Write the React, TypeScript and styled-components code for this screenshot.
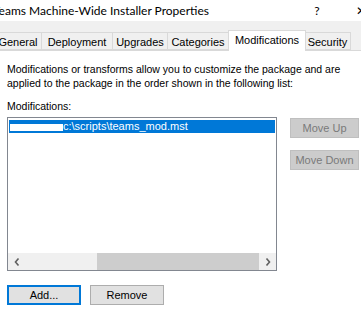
import {FunctionComponent} from 'react'
import styled, {createGlobalStyle} from 'styled-components'

const GlobalStyle = createGlobalStyle`
  html, body {
    margin: 0;
    padding: 0;
    background: #ffffff;
    overflow: hidden;
  }
  body {
    font-family: "Liberation Sans", Arial, sans-serif;
    font-size: 10.5px;
    color: #000000;
  }
`

const Dialog = styled.div`
  width: 361px;
  height: 309px;
  display: flex;
  flex-direction: column;
  background: #f0f0f0;
  overflow: hidden;
`

const TitleBar = styled.div`
  height: 21px;
  flex: none;
  display: flex;
  align-items: center;
  margin-right: -22px;
  background: #ffffff;
  font-family: Lato, "Noto Sans", sans-serif;
  font-size: 12px;
`

const Title = styled.span`
  flex: 1;
  margin-left: -7px;
  white-space: nowrap;
`

const TitleButton = styled.span`
  width: 44px;
  text-align: center;
  flex: none;
`

const TabStrip = styled.div`
  display: flex;
  align-items: flex-end;
  height: 20px;
  margin-top: 9px;
  margin-left: -6px;
  flex: none;
`

const Tab = styled.div<{$active?: boolean; $width: number}>`
  box-sizing: border-box;
  width: ${p => p.$width + (p.$active ? 1 : 0)}px;
  height: ${p => (p.$active ? 21 : 18)}px;
  padding-top: 3px;
  margin: ${p => (p.$active ? '0 -1px -1px -1px' : '0')};
  border: 1px solid #d9d9d9;
  border-bottom: ${p => (p.$active ? 'none' : '1px solid #d9d9d9')};
  border-left-width: ${p => (p.$active ? 1 : 0)}px;
  background: ${p => (p.$active ? '#ffffff' : '#f0f0f0')};
  text-align: center;
  font-size: 11px;
  position: relative;
  z-index: ${p => (p.$active ? 1 : 0)};
  white-space: nowrap;
  &:first-child {
    border-left-width: 1px;
  }
`

const Panel = styled.div`
  flex: 1;
  background: #ffffff;
  border-top: 1px solid #d9d9d9;
  padding: 11px 0 0 7px;
  display: flex;
  flex-direction: column;
`

const Description = styled.p`
  margin: 0;
  line-height: 14px;
  white-space: nowrap;
`

const FieldLabel = styled.div`
  margin-top: 9px;
  line-height: 14px;
`

const ListArea = styled.div`
  display: flex;
  gap: 13px;
  margin-top: 4px;
`

const ListBox = styled.div`
  box-sizing: border-box;
  width: 270px;
  height: 154px;
  border: 1px solid #828790;
  display: flex;
  flex-direction: column;
`

const ListItems = styled.div`
  flex: 1;
  padding: 2px 1px 0;
`

const ListItem = styled.div<{$selected?: boolean}>`
  height: 13px;
  line-height: 13px;
  padding-left: 1px;
  display: flex;
  align-items: center;
  background: ${p => (p.$selected ? '#0078d7' : 'transparent')};
  color: ${p => (p.$selected ? '#ffffff' : '#000000')};
  font-size: 11px;
  white-space: nowrap;
`

const Redaction = styled.span`
  display: inline-block;
  width: 53px;
  height: 7px;
  background: #ffffff;
  margin-top: 1px;
`

const HScrollBar = styled.div`
  height: 17px;
  display: flex;
  background: #f0f0f0;
`

const ScrollArrow = styled.div`
  width: 17px;
  display: flex;
  align-items: center;
  justify-content: center;
  flex: none;
`

const ScrollTrack = styled.div`
  flex: 1;
  display: flex;
  justify-content: flex-end;
`

const ScrollThumb = styled.div`
  width: 162px;
  background: #cdcdcd;
`

const SideButtons = styled.div`
  display: flex;
  flex-direction: column;
  gap: 12px;
  padding-top: 1px;
`

const Button = styled.button<{$default?: boolean; $width?: number}>`
  box-sizing: border-box;
  width: ${p => p.$width ?? 75}px;
  height: 20px;
  padding: 0;
  font-family: "Liberation Sans", Arial, sans-serif;
  font-size: 11px;
  color: #000000;
  background: #e1e1e1;
  border: ${p => (p.$default ? '2px solid #0078d7' : '1px solid #adadad')};
  &:disabled {
    background: #cccccc;
    border: 1px solid #bfbfbf;
    color: #7a7a7a;
  }
`

const BottomButtons = styled.div`
  display: flex;
  gap: 9px;
  margin-top: 14px;
`

const Chevron: FunctionComponent<{dir: 'left' | 'right'}> = ({dir}) => (
  <svg width="6" height="8" viewBox="0 0 6 8">
    <polyline
      points={dir === 'left' ? '4.5,0.5 1.5,4 4.5,7.5' : '1.5,0.5 4.5,4 1.5,7.5'}
      fill="none"
      stroke="#606060"
      strokeWidth="1.6"
    />
  </svg>
)

const tabs: {label: string; width: number}[] = [
  {label: 'General', width: 48},
  {label: 'Deployment', width: 71},
  {label: 'Upgrades', width: 55},
  {label: 'Categories', width: 61},
  {label: 'Modifications', width: 77},
  {label: 'Security', width: 46},
]

export default function App() {
  return (
    <>
      <GlobalStyle />
      <Dialog>
        <TitleBar>
          <Title>Teams Machine-Wide Installer Properties</Title>
          <TitleButton>?</TitleButton>
          <TitleButton>✕</TitleButton>
        </TitleBar>
        <TabStrip>
          {tabs.map(t => (
            <Tab key={t.label} $width={t.width} $active={t.label === 'Modifications'}>{t.label}</Tab>
          ))}
        </TabStrip>
        <Panel>
          <Description>
            Modifications or transforms allow you to customize the package and are
            <br />
            applied to the package in the order shown in the following list:
          </Description>
          <FieldLabel>Modifications:</FieldLabel>
          <ListArea>
            <ListBox>
              <ListItems>
                <ListItem $selected>
                  <Redaction />
                  c:\scripts\teams_mod.mst
                </ListItem>
              </ListItems>
              <HScrollBar>
                <ScrollArrow><Chevron dir="left" /></ScrollArrow>
                <ScrollTrack><ScrollThumb /></ScrollTrack>
                <ScrollArrow><Chevron dir="right" /></ScrollArrow>
              </HScrollBar>
            </ListBox>
            <SideButtons>
              <Button disabled $width={69}>Move Up</Button>
              <Button disabled $width={69}>Move Down</Button>
            </SideButtons>
          </ListArea>
          <BottomButtons>
            <Button $default $width={74}>Add...</Button>
            <Button $width={74}>Remove</Button>
          </BottomButtons>
        </Panel>
      </Dialog>
    </>
  )
}
